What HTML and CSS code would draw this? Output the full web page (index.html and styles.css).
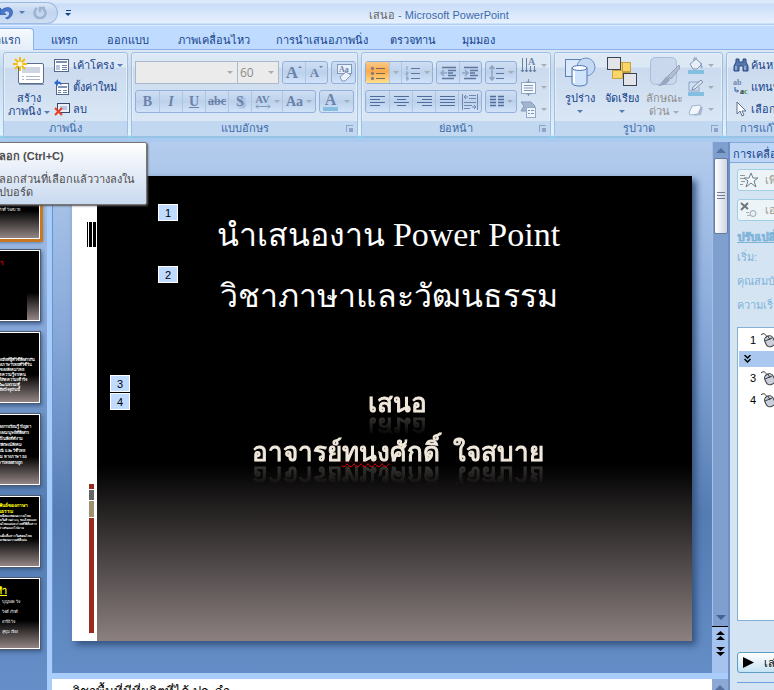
FILE: index.html
```html
<!DOCTYPE html>
<html lang="th">
<head>
<meta charset="utf-8">
<title>เสนอ - Microsoft PowerPoint</title>
<link rel="stylesheet" href="styles.css">
</head>
<body>
<div class="app">
  <header class="titlebar">
    <div class="quick">
      <button class="plain" aria-label="เลิกทำ"><svg width="14" height="16" viewBox="0 0 14 16"><path d="M0 3l2 2c4-4 11-3 10.500 3-.3 3-2.500 5-5 6l-2-1c3-1 4.500-3 4-5-.5-2.500-3.500-2.500-5.500-.5L6 9.500H0z" fill="#4a7ad0" stroke="#2149a0" stroke-width=".6"/></svg></button>
      <i class="caret blue"></i>
      <button class="plain redo" aria-label="ทำซ้ำ"><svg width="14" height="16" viewBox="0 0 14 16"><path d="M4 3c-4 3-3 10 3 10s7-7 3-9M7 7V3h5" fill="none" stroke="#9eb3d1" stroke-width="2.600"/></svg></button>
    </div>
    <button class="plain customize" aria-label="กำหนดแถบเครื่องมือ"><i class="bar"></i><i class="caret navy"></i></button>
    <h1 class="doc"><span>เสนอ</span> - Microsoft PowerPoint</h1>
  </header>

  <nav class="tabs">
    <a class="tab on" href="#"><span>หน้าแรก</span></a>
    <a class="tab t1" href="#">แทรก</a>
    <a class="tab t2" href="#">ออกแบบ</a>
    <a class="tab t3" href="#">ภาพเคลื่อนไหว</a>
    <a class="tab t4" href="#">การนำเสนอภาพนิ่ง</a>
    <a class="tab t5" href="#">ตรวจทาน</a>
    <a class="tab t6" href="#">มุมมอง</a>
  </nav>

  <div class="ribbon">
    <section class="group g1">
      <div class="tools">
        <button class="big">
          <svg width="32" height="31" viewBox="0 0 32 31"><rect x="5.500" y="7.500" width="25" height="20" rx="1.500" fill="#fff" stroke="#5b6f8c"/><path d="M6 28.500h25" stroke="#8494ab"/><path d="M9 11h18v6H9z" fill="#cdd4e3"/><path d="M9 20.500h2m2 0h14M9 23.500h2m2 0h14" stroke="#a9b5cb"/><path d="M2 3l10 10M12 3L2 13M7 1v14M0 8h14" stroke="#f3bb15" stroke-width="2"/><circle cx="7" cy="8" r="2.500" fill="#fffbd0"/></svg>
          <span>สร้าง</span><span>ภาพนิ่ง <i class="caret blue"></i></span>
        </button>
        <div class="stack">
          <button class="row"><svg width="16" height="16" viewBox="0 0 16 16"><rect x=".5" y="2.500" width="14" height="12" fill="#fff" stroke="#51688c"/><path d="M2 4h11v2H2z" fill="#7d91b3"/><path d="M2 8h4v5H2z" fill="#b9c6dc"/><path d="M8 8.500h5M8 10.500h5M8 12.500h5" stroke="#6e82a5"/></svg>เค้าโครง <i class="caret blue"></i></button>
          <button class="row"><svg width="16" height="16" viewBox="0 0 16 16"><rect x="2.500" y="4.500" width="12" height="11" fill="#fff" stroke="#51688c"/><path d="M4 7h9v2H4z" fill="#7d91b3"/><path d="M4 11.500h3M4 13.500h3M9 11.500h4M9 13.500h4" stroke="#6e82a5"/><path d="M0 4l4-4v2.500c3 0 4 2 3 4.500 0-1.500-1-2-3-2V7z" fill="#2f68c6"/></svg>ตั้งค่าใหม่</button>
          <button class="row"><svg width="16" height="16" viewBox="0 0 16 16"><rect x="3.500" y="2.500" width="12" height="9" fill="#e9eef8" stroke="#33496c"/><path d="M6 5h7v4H6z" fill="#b8c5dd"/><path d="M1 7l7 7M8 7l-7 7" stroke="#e3442b" stroke-width="2.200"/></svg>ลบ</button>
        </div>
      </div>
      <h2>ภาพนิ่ง</h2>
    </section>

    <section class="group g2">
      <div class="tools lines">
        <div class="line">
          <div class="combo"><input class="fontname" aria-label="แบบอักษร"><i class="caret"></i></div>
          <div class="combo size"><input aria-label="ขนาดแบบอักษร" value="60"><i class="caret"></i></div>
          <div class="set grow"><button class="serif" aria-label="เพิ่มขนาด"><span class="l16">A</span><i class="up"></i></button><button class="serif" aria-label="ลดขนาด"><span class="l13">A</span><i class="caret mini"></i></button></div>
          <div class="set"><button aria-label="ล้างการจัดรูปแบบ"><svg width="18" height="18" viewBox="0 0 18 18"><rect x="2.500" y=".5" width="14" height="9" fill="#e8f0fa" stroke="#8197bb"/><text x="4" y="8" font-size="8" class="svgt">Aa</text><path d="M5 13l6-5 5 3-6 6H7z" fill="#eef3fa" stroke="#8197bb"/></svg></button></div>
        </div>
        <div class="line">
          <div class="set fmt"><button class="serif b">B</button><button class="serif it">I</button><button class="serif un">U</button><button class="serif st">abc</button><button class="serif sh">S</button><button class="serif av"><span>AV<svg width="16" height="5" viewBox="0 0 16 5"><path d="M1 2.500h14M3 .5l-2 2 2 2M13 .5l2 2-2 2" stroke="#8397bb" fill="none"/></svg></span><i class="caret"></i></button><button class="serif aa">Aa<i class="caret"></i></button></div>
          <div class="set"><button class="serif col"><span>A</span><i class="caret"></i></button></div>
        </div>
      </div>
      <h2>แบบอักษร<i class="launch"></i></h2>
    </section>

    <section class="group g3">
      <div class="tools para">
      <div class="lines">
        <div class="line">
          <div class="set"><button class="hot" aria-label="สัญลักษณ์แสดงหัวข้อย่อย"><svg width="16" height="16" viewBox="0 0 16 16"><path d="M6 3.500h9M6 8.500h9M6 13.500h9" stroke="#7a6a55"/><g fill="#8d7f77"><circle cx="2.500" cy="3.500" r="1.700"/><circle cx="2.500" cy="8.500" r="1.700"/><circle cx="2.500" cy="13.500" r="1.700"/></g></svg></button><button class="slim" aria-label="ตัวเลือกสัญลักษณ์"><i class="caret"></i></button><button class="wide" aria-label="ลำดับเลข"><svg width="16" height="16" viewBox="0 0 16 16"><path d="M6 3.500h9M6 8.500h9M6 13.500h9" stroke="#5d779f"/><path d="M2 1v4M1 7h2v1.500H1V10h2M1 12h2v3H1m0-1.500h2" stroke="#8fa2c1" fill="none"/></svg><i class="caret"></i></button></div>
          <div class="set"><button class="m" aria-label="ลดการเยื้อง"><svg width="17" height="16" viewBox="0 0 17 16"><path d="M2 2.500h14M8 5.500h8M8 8h5M8 10.500h8M2 13.500h12" stroke="#5f779e" stroke-width="1.500"/><path d="M7 8H1m3-3L1 8l3 3" stroke="#8fa5c7" stroke-width="1.500" fill="none"/></svg></button><button class="m" aria-label="เพิ่มการเยื้อง"><svg width="17" height="16" viewBox="0 0 17 16"><path d="M2 2.500h14M8 5.500h8M8 8h5M8 10.500h8M2 13.500h12" stroke="#5f779e" stroke-width="1.500"/><path d="M0 8h6M3 5l3 3-3 3" stroke="#8fa5c7" stroke-width="1.500" fill="none"/></svg></button></div>
          <div class="set"><button class="w31" aria-label="ระยะห่างบรรทัด"><svg width="16" height="16" viewBox="0 0 16 16"><path d="M7 3.500h8M7 8.500h8M7 13.500h8" stroke="#5d779f"/><path d="M3 1v14M0.500 4L3 1l2.500 3M.5 12L3 15l2.500-3" stroke="#8fa2c1" stroke-width="1.500" fill="none"/></svg><i class="caret"></i></button></div>
        </div>
        <div class="line">
          <div class="set align"><button aria-label="ชิดซ้าย"><svg width="15" height="13" viewBox="0 0 15 13"><path d="M0 1.500h15M0 4.500h10M0 7.500h15M0 10.500h10" stroke="#4f6c9a"/></svg></button><button aria-label="กึ่งกลาง"><svg width="15" height="13" viewBox="0 0 15 13"><path d="M0 1.500h15M3 4.500h9M0 7.500h15M3 10.500h9" stroke="#4f6c9a"/></svg></button><button aria-label="ชิดขวา"><svg width="15" height="13" viewBox="0 0 15 13"><path d="M0 1.500h15M5 4.500h10M0 7.500h15M5 10.500h10" stroke="#4f6c9a"/></svg></button><button aria-label="เต็มแนว"><svg width="15" height="13" viewBox="0 0 15 13"><path d="M0 1.500h15M0 4.500h15M0 7.500h15M0 10.500h15" stroke="#4f6c9a"/></svg></button><button aria-label="กระจายแบบไทย"><svg width="16" height="16" viewBox="0 0 16 16"><path d="M.5 0v16M15.500 0v16M7 1.500h7M7 4.500h7M2 8.500h12M2 11.500h8M2 14.500h6M2 3h4M4 1L2 3l2 2M10 13h4m-2-2l2 2-2 2" stroke="#7189b2" fill="none"/></svg></button></div>
          <div class="set"><button class="w31" aria-label="คอลัมน์"><svg width="14" height="13" viewBox="0 0 14 13"><path d="M0 1.500h6M8 1.500h6M0 4.500h6M8 4.500h6M0 7.500h6M8 7.500h6M0 10.500h6M8 10.500h6" stroke="#4f6c9a" stroke-width="1.400"/></svg><i class="caret"></i></button></div>
        </div>
      </div>
      <div class="minis">
        <button aria-label="ทิศทางข้อความ"><svg width="17" height="17" viewBox="0 0 17 17"><path d="M2.500 1v14M6.500 1v14M10.500 9v6M14.500 9v6M1 13l1.500 2L4 13M5 13l1.500 2L8 13M9 13l1.500 2 1.500-2M13 13l1.500 2 1.500-2" stroke="#67809f" fill="none"/><text x="8" y="8" font-size="10" class="svgt">A</text></svg><i class="caret"></i></button>
        <button aria-label="จัดแนวข้อความ"><svg width="17" height="17" viewBox="0 0 17 17"><rect x="1.500" y="3.500" width="14" height="11" fill="#f4f8fd" stroke="#93a8c6"/><path d="M4 6.500h9M4 9h9M4 11.500h9M8.500 0v4M6.500 2l2 2 2-2M8.500 17v-3M6.500 16l2-2 2 2" stroke="#7f95b8" fill="none"/></svg><i class="caret"></i></button>
        <button aria-label="แปลงเป็น SmartArt"><svg width="17" height="17" viewBox="0 0 17 17"><path d="M1 1h10l4 4-4 5H1l3-5z" fill="#a3b6d1" stroke="#8499ba"/><rect x="6.500" y="6.500" width="9" height="10" fill="#eef4fb" stroke="#93a8c6"/><path d="M8 9.500h2m1 0h3M8 12.500h2m1 0h3" stroke="#7f95b8"/></svg><i class="caret"></i></button>
      </div>
      </div>
      <h2>ย่อหน้า<i class="launch"></i></h2>
    </section>

    <section class="group g4">
      <div class="tools draw">
        <button class="big"><svg width="32" height="31" viewBox="0 0 32 31"><rect x="1.500" y="3.500" width="17" height="17" fill="#dce9f9" stroke="#5a83b9"/><circle cx="22" cy="11" r="9" fill="#c4daf4" stroke="#6d93c6"/><path d="M8 12v15c0 4 15 4 15 0V12z" fill="#cfe3fa" stroke="#4e77b0"/><ellipse cx="15.500" cy="12" rx="7.500" ry="2.500" fill="#f5faff" stroke="#4e77b0"/><path d="M10 15v12" stroke="#fff" stroke-width="2"/></svg><span>รูปร่าง</span><i class="caret blue"></i></button>
        <button class="big"><svg width="32" height="31" viewBox="0 0 32 31"><path d="M12.500 6.500h12v10h-12z" fill="#f8cf52" stroke="#c09a3c"/><path d="M6.500 14.500h10v8h-10zM16.500 6.500h8v9h-8z" fill="#fad666" stroke="#c8a144"/><rect x="1.500" y="1.500" width="13" height="12" fill="#e2e4e9" stroke="#3c4250"/><rect x="17.500" y="17.500" width="13" height="12" fill="#e2e4e9" stroke="#3c4250"/></svg><span>จัดเรียง</span><i class="caret blue"></i></button>
        <button class="big dim"><svg width="32" height="31" viewBox="0 0 32 31"><rect x="2.500" y="1.500" width="26" height="27" rx="5" fill="#c9d8ec" stroke="#a8bcd8"/><path d="M31 9L20 20l3 3 9-11z" fill="#b2bfd3" stroke="#93a2ba"/><path d="M19 20l3 3c-2 5-7 7-12 7 4-3 5-7 9-10z" fill="#98a7be"/></svg><span>ลักษณะ</span><span>ด่วน <i class="caret"></i></span></button>
        <div class="minis">
          <button aria-label="เติมสีรูปร่าง"><svg width="17" height="17" viewBox="0 0 17 17"><path d="M3 7l6-5 6 5-5 5H6zM7 4V1h3" fill="#e8eff8" stroke="#8496b3"/><path d="M13 5l3 5-2 2z" fill="#8ea8cc"/><path d="M1 13h16v4H1z" fill="#84bfe2"/></svg><i class="caret"></i></button>
          <button aria-label="เส้นกรอบรูปร่าง"><svg width="17" height="17" viewBox="0 0 17 17"><path d="M2 3h10M2 3v9h10V8" fill="none" stroke="#8aa3c8"/><path d="M5 11l1-3 8-7 2 2-8 7z" fill="#dbe5f2" stroke="#7f90ab"/><path d="M1 13h16v4H1z" fill="#84bfe2"/></svg><i class="caret"></i></button>
          <button aria-label="ลักษณะพิเศษรูปร่าง"><svg width="17" height="17" viewBox="0 0 17 17"><path d="M7 15l7-1 2-7-3-3z" fill="#a9b9d0"/><path d="M2 12l3-7 8-1 1 2-3 7-8 1z" fill="#f2f5fa" stroke="#a3b4cd"/></svg><i class="caret"></i></button>
        </div>
      </div>
      <h2>รูปวาด<i class="launch"></i></h2>
    </section>

    <section class="group g5">
      <div class="tools">
        <div class="stack">
          <button class="row"><svg width="16" height="16" viewBox="0 0 16 16"><path d="M3 2h3v3h4V2h3v3l2 4v5h-5V9H6v5H1V9l2-4z" fill="#5575ad" stroke="#2c4a80"/><path d="M3 9v4M12 9v4" stroke="#cddcf2"/></svg>ค้นหา</button>
          <button class="row"><svg width="16" height="16" viewBox="0 0 16 16"><text x="0" y="6" font-size="8" class="svgt">ab</text><path d="M2 8v4h3M4 10.500L5.500 12 4 13.500" stroke="#2d5aa5" fill="none"/><text x="7" y="15" font-size="8" class="svgt dark">a<tspan class="green">c</tspan></text></svg>แทนที่</button>
          <button class="row"><svg width="16" height="16" viewBox="0 0 16 16"><path d="M4 1v12l3-3 2 5 2-1-2-4h4z" fill="#fff" stroke="#5b6f91"/></svg>เลือก</button>
        </div>
      </div>
      <h2>การแก้ไข</h2>
    </section>
  </div>

  <main class="work">
    <aside class="thumbs">
      <div class="thumb sel"><p class="tw">อาจารย์ทนงศักดิ์ ใจสบาย</p></div>
      <div class="thumb black"><p class="tr">ภาษา</p></div>
      <div class="thumb t-text low">ภาษาเป็นเครื่องมือที่ผู้ที่ใช้สื่อสารกัน<br>ความหมายของภาษาไทยที่ใช้ใน<br>เป็นวัฒนธรรมของสังคมไทย<br>และการถ่ายทอดความรู้จากคน<br>ไปสู่คนหนึ่งให้เกิดความเข้าใจ<br>ทางภาษาเป็นวัฒนธรรมที่<br>สืบต่อกันมาจนถึงปัจจุบันนี้</div>
      <div class="thumb t-text mid">ภาษาเป็นสื่อของการเรียนรู้ ปัญหา<br>และความคิดของมนุษย์ที่สื่อสาร<br>วัฒนธรรม ถือ เป็นสิ่งที่ดีงาม<br>ของชาติที่มีเอกลักษณ์สังคม<br>คนไทย ประเพณี และ ใช้ไทย<br>ที่มีความงดงาม ทางภาษา 50<br>และการใช้ภาษาไทยอย่างถูก</div>
      <div class="thumb t-text fine"><b>ความสัมพันธ์ของภาษา<br>และวัฒนธรรม</b>ภาษาเป็นส่วนหนึ่งของวัฒนธรรมไทย<br>วัฒนธรรมไทยในด้านต่าง ๆ ของไทยและ<br>ภาษาถิ่นของคนไทยแต่ละภาคที่ใช้สื่อสาร<br>มีความหมายต่างกันออกไปตาม<br>ท้องถิ่นต่าง ๆ<br>ภาษาเป็นเครื่องมือสื่อสารในสังคมไทย<br>และใช้ถ่ายทอดวัฒนธรรมที่สืบต่อ<br>กันมาช้านาน</div>
      <div class="thumb names"><b>ผู้จัดทำ</b><p>บุญรอด ใจ</p><p>ใจดี ภักดี</p><p>อารีย์ ใจ</p><p>สุขุม เรือง</p></div>
    </aside>

    <div class="center">
      <div class="stage">
        <article class="slide">
          <div class="stripe"><div class="code"></div><div class="marks"><i></i><i></i><i></i><i></i></div></div>
          <div class="face">
            <h3>นำเสนองาน <span>Power Point</span><br>วิชาภาษาและวัฒนธรรม</h3>
            <div class="sub"><p>เสนอ</p><p>อาจารย์<u>ทนง</u>ศักดิ์&nbsp; ใจสบาย</p></div>
          </div>
          <span class="badge b1">1</span><span class="badge b2">2</span><span class="badge b3">3</span><span class="badge b4">4</span>
        </article>
      </div>
      <div class="notes">วิชาพื้นที่มีที่ผลิตที่ได้ ประจำ</div>
    </div>

    <div class="scroll">
      <div class="track"><i class="tri top"></i><div class="grip"></div><i class="tri down"></i></div>
      <div class="pager"><svg width="9" height="25" viewBox="0 0 9 25"><path d="M4.500 0L9 4H0zM4.500 5L9 9H0zM0 16h9l-4.500 4zM0 21h9l-4.500 4z"/></svg></div>
      <div class="notescroll"><i class="tri top"></i></div>
    </div>

    <aside class="pane">
      <div class="inner">
        <h2 class="panehead">การเคลื่อนไหวแบบกำหนดเอง</h2>
        <button class="pbtn"><svg width="18" height="16" viewBox="0 0 18 16"><path d="M0 3.500h5M0 6.500h4M1 9.500h4M0 12.500h3" stroke="#8b979f"/><path d="M11 1l2 5h5l-4 3 2 6-5-4-5 4 2-6-4-3h5z" fill="#f5f9fb" stroke="#6e7d89"/></svg>เพิ่มลักษณะพิเศษ</button>
        <button class="pbtn"><svg width="18" height="16" viewBox="0 0 18 16"><path d="M1 1l7 6M8 1L1 8" stroke="#6c777f" stroke-width="2"/><path d="M6 10.500h3M7 13.500h3" stroke="#a6b2bd"/><circle cx="13" cy="11.500" r="3" fill="#e8eef2" stroke="#9aa8b3"/></svg>เอาออก</button>
        <h4>ปรับเปลี่ยน: ชื่อเรื่อง</h4>
        <p class="plabel">เริ่ม:</p><p class="plabel">คุณสมบัติ:</p><p class="plabel">ความเร็ว:</p>
        <ol class="list">
          <li>1<svg class="mouse" width="16" height="16" viewBox="0 0 16 16"><path d="M0 3c3-3 5 0 6 2" fill="none" stroke="#333"/><rect x="4" y="4" width="9" height="11" rx="4" transform="rotate(-25 8 9)" fill="#c9ced8" stroke="#3b4048"/><path d="M4 9l7-3M7 4l2 4" stroke="#3b4048"/></svg></li>
          <li class="mark"><svg width="7" height="8" viewBox="0 0 7 8"><path d="M.5 0l3 3 3-3M.5 4l3 3 3-3" fill="none" stroke="#000" stroke-width="1.500"/></svg></li>
          <li>3<svg class="mouse" width="16" height="16" viewBox="0 0 16 16"><path d="M0 3c3-3 5 0 6 2" fill="none" stroke="#333"/><rect x="4" y="4" width="9" height="11" rx="4" transform="rotate(-25 8 9)" fill="#c9ced8" stroke="#3b4048"/><path d="M4 9l7-3M7 4l2 4" stroke="#3b4048"/></svg></li>
          <li>4<svg class="mouse" width="16" height="16" viewBox="0 0 16 16"><path d="M0 3c3-3 5 0 6 2" fill="none" stroke="#333"/><rect x="4" y="4" width="9" height="11" rx="4" transform="rotate(-25 8 9)" fill="#c9ced8" stroke="#3b4048"/><path d="M4 9l7-3M7 4l2 4" stroke="#3b4048"/></svg></li>
        </ol>
        <button class="play"><svg width="13" height="11" viewBox="0 0 13 11"><path d="M1 0l11 5.500L1 11z"/></svg>เล่น</button>
        <hr>
      </div>
    </aside>

    <div class="tip" role="tooltip"><b>คัดลอก (Ctrl+C)</b><p>คัดลอกส่วนที่เลือกแล้ววางลงใน<br>คลิปบอร์ด</p></div>
  </main>
</div>
</body>
</html>
```
FILE: styles.css
```css
* { box-sizing: border-box; }
body { margin: 0; font: 11px/14px "Liberation Sans", sans-serif; color: #15428b; overflow: hidden; }
button { font: inherit; color: inherit; background: none; border: 0; padding: 0; margin: 0; display: flex; align-items: center; justify-content: center; white-space: nowrap; }
h1, h2, h3, h4, p, ol { margin: 0; padding: 0; font-weight: normal; font-size: inherit; }
svg { display: block; flex: none; }
.app { display: flex; flex-direction: column; height: 100vh; background: #bfdbff; }

.caret { display: inline-block; vertical-align: middle; flex: none; border: 3px solid transparent; border-top-color: #a7adb4; border-bottom: 0; }
.caret.blue { border-top-color: #567db1; }
.caret.navy { border-top-color: #15428b; }
.svgt { font-family: "Liberation Serif", serif; font-weight: bold; fill: #6f86ad; }
.svgt.dark { fill: #333; }
.green { fill: #1c9a3a; }

.titlebar { height: 25px; flex: none; display: flex; align-items: center; background: linear-gradient(#dbe9fb 0 3px, #c9ddf7 4px, #d8e7fb 14px, #e6f1fe 23px, #b0cff7 24px); }
.quick { width: 58px; height: 22px; display: flex; align-items: center; gap: 5px; border: 1px solid #9dbbe2; border-left: 0; border-radius: 0 11px 11px 0; background: linear-gradient(#d9e6f7, #c1d5ef 50%, #cfdff4); }
.redo { margin-left: 3px; }
.customize { flex-direction: column; gap: 2px; margin-left: 7px; }
.bar { width: 5px; height: 1px; background: #15428b; }
.doc { margin-left: 298px; margin-top: 4px; color: #3e6aaa; white-space: nowrap; }
.doc span { color: #666; }

.tabs { height: 25px; flex: none; display: flex; border-top: 1px solid #e1eeff; border-bottom: 1px solid #8db2e3; }
.tab { color: #15428b; text-decoration: none; padding-top: 7px; white-space: nowrap; }
.tab.on { width: 34px; height: 25px; display: flex; justify-content: flex-end; padding-right: 12px; background: linear-gradient(#f5f9fe, #e2ecf8); border: 1px solid #8db2e3; border-width: 1px 1px 0 0; border-radius: 0 4px 0 0; margin-top: 2px; padding-top: 4px; }
.t1 { margin-left: 17px; width: 56px; } .t2 { width: 71px; } .t3 { width: 98px; } .t4 { width: 114px; } .t5 { width: 72px; }

.ribbon { height: 92px; flex: none; display: flex; gap: 3px; padding: 2px 0 5px 3px; overflow: hidden; background: linear-gradient(#dce8f5, #c8d9ed 20px, #e3f2ff 85px, #6fc6ea 87px, #a9c9ef 88px); }
.group { flex: none; display: flex; flex-direction: column; border: 1px solid #9fbfdf; border-radius: 3px; background: linear-gradient(#dde8f5 0 14px, #cbdaee 15px, #d9e7f5 68px); box-shadow: inset 0 0 0 1px #e6eff9; overflow: hidden; }
.g1 { width: 125px; } .g2 { width: 227px; } .g3 { width: 190px; } .g4 { width: 169px; } .g5 { width: 150px; }
.tools { flex: 1; display: flex; padding: 0 4px; }
.group h2 { height: 15px; flex: none; background: #c1d8f0; color: #3e6aaa; text-align: center; line-height: 15px; position: relative; }
.launch { position: absolute; right: 4px; top: 4px; width: 7px; height: 7px; border: 1px solid #8ba5c9; border-width: 1px 0 0 1px; }
.launch::after { content: ""; position: absolute; right: 0; bottom: 0; width: 4px; height: 4px; background: #8ba5c9; }
.g5 h2 { text-align: left; padding-left: 13px; }
.big { width: 42px; flex-direction: column; justify-content: flex-start; padding-top: 3px; line-height: 13px; }
.big svg { margin-bottom: 5px; }
.big > .caret { margin-top: 5px; }
.stack { display: flex; flex-direction: column; padding: 1px 0; margin-left: 4px; }
.row { height: 22px; justify-content: flex-start; gap: 3px; }
.g5 .stack { margin-left: 2px; }
.g5 .row { gap: 2px; }
.draw .minis { margin-left: 2px; }
.dim { color: #8d8d8d; }
.lines { display: flex; flex-direction: column; gap: 6px; padding-top: 8px; }
.tools.lines { padding: 8px 3px 0; }
.line { display: flex; gap: 3px; height: 23px; }
.combo { width: 103px; display: flex; align-items: center; border: 1px solid #abb9cc; background: #ebebeb; padding-right: 4px; margin-right: -4px; }
.combo input { flex: 1; min-width: 0; border: 0; background: none; font: 12px "Open Sans", sans-serif; color: #8d8d8d; padding: 0 0 0 2px; }
.combo.size { width: 42px; margin-right: 0; }
.set { display: flex; border: 1px solid #93b0da; border-radius: 3px; background: linear-gradient(#cfdff3, #bcd1ec 50%, #d1e3f8); }
.set button + button { border-left: 1px solid #aec5e4; }
.set button { width: 23px; gap: 3px; }
.set.grow button { width: 22px; }
.serif { font: bold 14px "Liberation Serif", serif; color: #6b82aa; }
.l16 { font-size: 17px; } .l13 { font-size: 13px; }
.set .l13 + .caret, .up { align-self: flex-start; margin: 4px 0 0 -3px; }
.set .mini { border-width: 2px 2px 0; border-top-color: #6b82aa; }
.up { border: 2px solid transparent; border-bottom-color: #6b82aa; border-top: 0; }
.it { font-style: italic; } .un { text-decoration: underline; } .st { text-decoration: line-through; font-size: 12px; }
.sh { text-shadow: 2px 2px 2px #8aa0c4; }
.set .av { width: 31px; font-size: 11px; line-height: 10px; } .set .aa { width: 33px; }
.set .col { width: 33px; gap: 6px; }
.col span { border-bottom: 4px solid #84bfe2; line-height: 14px; padding: 0 2px; font-size: 16px; }
.para { padding: 0 3px; }
.set .hot { background: linear-gradient(#fbc98a, #fcaa49 45%, #fde08b); }
.set .slim { width: 12px; } .set .wide { width: 31px; } .set .w31 { width: 30px; } .set .m { width: 22px; }
.minis { display: flex; flex-direction: column; gap: 4px; padding-top: 3px; margin-left: 3px; }
.minis button { gap: 4px; height: 18px; }

.work { position: relative; flex: 1; min-height: 0; display: flex; background: linear-gradient(#b4cdee, #86a8d9 35%, #557db3 68%, #668fc9); }
.thumbs { width: 47px; flex: none; overflow: hidden; display: flex; flex-direction: column; gap: 11px; padding-top: 26px; }
.thumb { width: 94px; height: 71px; flex: none; margin-left: -54px; border: 1px solid #fff; outline: 1px solid #4d5a70; box-shadow: 1px 2px 4px 1px #3e5f8c; background: linear-gradient(#000 60%, #938585); color: #fff; white-space: nowrap; overflow: hidden; }
.thumb.sel { outline: 3px solid #c87820; }
.tw { font-size: 4px; line-height: 6px; padding: 38px 0 0 31px; }
.thumb.black { background: linear-gradient(90deg, #000 80px, transparent 80px), linear-gradient(#000 60%, #938585); }
.tr { color: #f00; font: bold 6px/8px "Liberation Sans", sans-serif; text-align: right; padding: 8px 36px 0 0; }
.t-text { font-size: 4px; line-height: 5px; font-weight: bold; text-align: left; padding-left: 28px; }
.low { padding-top: 24px; } .mid { padding-top: 9px; line-height: 6px; } .fine { font-size: 3px; line-height: 4px; padding: 5px 0 0 34px; }
.fine b { display: block; font-size: 5px; line-height: 6px; color: #ff0; }
.names { padding: 6px 0 0; font: bold 4px/10px "Liberation Serif", serif; }
.names b { color: #ff0; font-size: 9px; text-decoration: underline; display: block; line-height: 12px; text-align: right; padding-right: 32px; }
.names p { padding-left: 55px; }
.center { flex: 1; min-width: 0; display: flex; flex-direction: column; border-left: 5px solid #a9cdfb; box-shadow: inset 1px 0 #6593d6; }
.stage { flex: 1; min-height: 0; padding: 34px 20px 0; }
.slide { position: relative; display: flex; aspect-ratio: 4 / 3; background: #fff; box-shadow: 4px 4px 7px #34527f; }
.stripe { width: 25px; flex: none; display: flex; flex-direction: column; align-items: flex-end; justify-content: space-between; padding: 46px 0 8px; }
.code { width: 10px; height: 25px; background: linear-gradient(90deg, #000 1px, #fff 1px 2px, #000 2px 5px, #fff 5px 6px, #000 6px 9px, #fff 9px); }
.marks { display: flex; flex-direction: column; gap: 1px; width: 5px; margin-right: 3px; }
.marks i { height: 5px; background: #972b20; }
.marks i:nth-child(2) { height: 10px; background: #656467; } .marks i:nth-child(3) { height: 16px; background: #a09070; } .marks i:nth-child(4) { height: 115px; }
.face { flex: 1; background: linear-gradient(#000 62%, #8c8080); color: #fff; text-align: center; padding: 29px 12px 0 0; white-space: nowrap; font-family: "Liberation Serif", serif; }
.face h3 { font-size: 32px; line-height: 61px; }
.face h3 span { font-size: 34px; line-height: 1; }
.sub { color: #f1e9dc; font-weight: bold; font-size: 26px; line-height: 49px; padding: 52px 0 0 18px; -webkit-text-stroke: 1px #f1e9dc; }
.sub p { width: max-content; margin: 0 auto; -webkit-box-reflect: below -26px linear-gradient(transparent 30%, rgba(255,255,255,.4)); }
.sub u { text-decoration: underline wavy #f00 1px; text-underline-offset: 2px; }
.badge { position: absolute; width: 20px; height: 17px; border: 1px solid #fff; background: #bfdbff; color: #000; text-align: center; line-height: 16px; }
.b1 { left: 86px; top: 28px; } .b2 { left: 86px; top: 90px; } .b3 { left: 38px; top: 199px; } .b4 { left: 38px; top: 217px; }
.notes { height: 17px; flex: none; border-top: 6px solid #a9cdfb; background: #fff; color: #000; padding: 6px 0 0 21px; font-size: 13px; overflow: hidden; white-space: nowrap; }
.scroll { width: 16px; flex: none; display: flex; flex-direction: column; }
.track { flex: 1; display: flex; flex-direction: column; align-items: center; padding: 6px 0; background: #7f9fcf; border-left: 1px solid #a6bfe4; }
.tri { border: 5px solid transparent; }
.tri.top { border-bottom-color: #56709f; border-top: 0; }
.tri.down { border-top-color: #46629a; border-bottom: 0; margin-top: auto; }
.grip { width: 14px; height: 76px; margin-top: 5px; border: 1px solid #667b9e; border-radius: 2px; background: repeating-linear-gradient(#6e7d98 0 1px, transparent 1px 3px) 50% 50% / 8px 9px no-repeat, linear-gradient(90deg, #fff, #cdd5e2); }
.pager { height: 47px; border-top: 1px solid #000; background: #a6c3ef; display: flex; justify-content: center; padding-top: 4px; }
.notescroll { height: 17px; border-top: 6px solid #a9cdfb; background: #8ca9d6; display: flex; justify-content: center; padding-top: 5px; }
.pane { width: 46px; flex: none; overflow: hidden; background: #d5e4f3; border-left: 2px solid #6d91c7; }
.inner { width: 190px; display: flex; flex-direction: column; padding-left: 7px; height: 100%; }
.panehead { height: 21px; flex: none; margin-left: -7px; padding-left: 3px; line-height: 22px; background: #bed6f5; border: 1px solid #83a8da; border-width: 1px 0; }
.pbtn { height: 22px; flex: none; margin-top: 6px; border: 1px solid #a0cfe2; border-radius: 3px; background: #edf4f7; color: #9a9a94; justify-content: flex-start; padding-left: 2px; gap: 7px; }
.pbtn + .pbtn { margin-top: 8px; }
.inner h4 { font-weight: bold; color: #7fb4d9; text-decoration: underline; margin-top: 8px; line-height: 16px; text-shadow: 1px 0 #7fb4d9; }
.plabel { color: #7fb4d9; line-height: 14px; margin-top: 5px; margin-bottom: 5px; }
.list { flex: 1; margin-top: 10px; background: #fff; border: 1px solid #86afd4; list-style: none; color: #000; padding: 1px; }
.list li { height: 22px; padding-left: 11px; display: flex; align-items: center; gap: 5px; }
.list li.mark { height: 16px; background: #aac7f0; padding-left: 5px; }
.play { height: 21px; flex: none; margin-top: 31px; border: 1px solid #5e9dc4; border-radius: 3px; background: linear-gradient(#fff, #c6e3f4); color: #000; justify-content: flex-start; padding-left: 4px; gap: 9px; }
hr { width: 100%; flex: none; margin: 9px 0 7px; border: 0; border-top: 1px solid #6f9fdc; }
.tip { position: absolute; left: -60px; top: 0; width: 207px; height: 63px; border: 1px solid #767676; background: linear-gradient(#fff, #c9d9ef); color: #4c4c4c; padding: 7px 13px 0 0; border-radius: 0 2px 2px 0; box-shadow: 1px 1px 2px #555; text-align: left; white-space: nowrap; line-height: 13px; }
.tip b { display: block; padding-left: 44px; margin-bottom: 10px; }
.tip p { padding-left: 44px; }
```
